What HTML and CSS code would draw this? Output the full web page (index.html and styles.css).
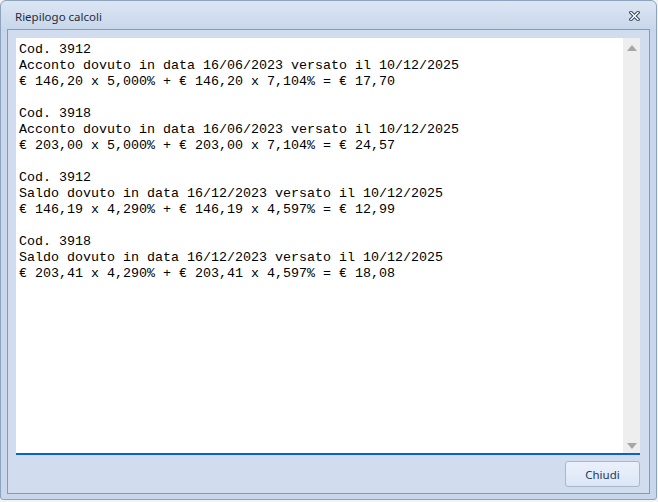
FILE: index.html
```html
<!DOCTYPE html>
<html lang="it">
<head>
  <meta charset="UTF-8"/>
  <title>Riepilogo calcoli</title>
  <link rel="stylesheet" href="styles.css">
</head>
<body>
  <div class="window">
    <div class="titlebar">
      <span class="title">Riepilogo calcoli</span>
      <svg class="close" width="11" height="10" viewBox="0 0 11 10">
        <path d="M2 1.5 L9 8.5 M9 1.5 L2 8.5" stroke="#3d4a5c" stroke-width="3.4" stroke-linecap="square"/>
        <path d="M2 1.5 L9 8.5 M9 1.5 L2 8.5" stroke="#fff" stroke-width="1.4" stroke-linecap="square"/>
      </svg>
    </div>

    <div class="client">
      <div class="memo">
        <pre class="memo-text">Cod. 3912
Acconto dovuto in data 16/06/2023 versato il 10/12/2025
€ 146,20 x 5,000% + € 146,20 x 7,104% = € 17,70

Cod. 3918
Acconto dovuto in data 16/06/2023 versato il 10/12/2025
€ 203,00 x 5,000% + € 203,00 x 7,104% = € 24,57

Cod. 3912
Saldo dovuto in data 16/12/2023 versato il 10/12/2025
€ 146,19 x 4,290% + € 146,19 x 4,597% = € 12,99

Cod. 3918
Saldo dovuto in data 16/12/2023 versato il 10/12/2025
€ 203,41 x 4,290% + € 203,41 x 4,597% = € 18,08</pre>
        <div class="scrollbar">
          <span class="arrow up"></span>
          <span class="arrow down"></span>
        </div>
      </div>
      <div class="footer">
        <button class="btn">Chiudi</button>
      </div>
    </div>
  </div>
</body>
</html>
```

FILE: styles.css
```css
:root{
  --frame: #c8d7eb;
  --client: #d1ddee;
  --edge: #7f9cc0;
  --accent: #0a64c8;
}
* { box-sizing: border-box; margin: 0; }
html, body { height: 100%; }
body {
  background: #f3f3f3;
  font-family: "Noto Sans", "Open Sans", sans-serif;
}

/* Window frame */
.window {
  width: 657px;
  height: 500px;
  border: 1px solid #8da2bd;
  border-radius: 6px 6px 3px 3px;
  background: linear-gradient(#dce6f4 0, #c6d6ea 30px, var(--frame) 31px);
  display: flex;
  flex-direction: column;
}
.titlebar {
  height: 28px;
  display: flex;
  align-items: center;
  justify-content: space-between;
  padding: 0 16px 0 14px;
}
.title { font-size: 11.5px; color: #1e2c3e; padding-top: 2px; }
.close { margin-top: 2px; }

/* Client area */
.client {
  flex: 1;
  margin: 0 6px 5px;
  border: 1px solid var(--edge);
  background: var(--client);
  padding: 8px 9px 0 8px;
  display: flex;
  flex-direction: column;
}
.memo {
  height: 417px;
  display: flex;
  background: #fff;
  border-bottom: 2px solid var(--accent);
}
.memo-text {
  flex: 1;
  padding: 4px 3px;
  font-family: "Liberation Mono", "Courier New", monospace;
  font-size: 13.33px;
  line-height: 16px;
  color: #000;
}
.scrollbar {
  width: 17px;
  background: #eeeeee;
  display: flex;
  flex-direction: column;
  justify-content: space-between;
  align-items: center;
  padding: 7px 0 4px;
}
.arrow {
  width: 0; height: 0;
  border-left: 5px solid transparent;
  border-right: 5px solid transparent;
}
.arrow.up { border-bottom: 6px solid #a6a6a6; }
.arrow.down { border-top: 6px solid #a6a6a6; }

/* Footer */
.footer {
  display: flex;
  justify-content: flex-end;
  padding-top: 6px;
}
.btn {
  width: 75px;
  height: 26px;
  border: 1px solid #a7b7cd;
  border-radius: 3px;
  background: linear-gradient(#eaf1fb, #dbe6f5);
  font-family: "Noto Sans", "Open Sans", sans-serif;
  font-size: 11.5px;
  color: #1e395b;
}
```
